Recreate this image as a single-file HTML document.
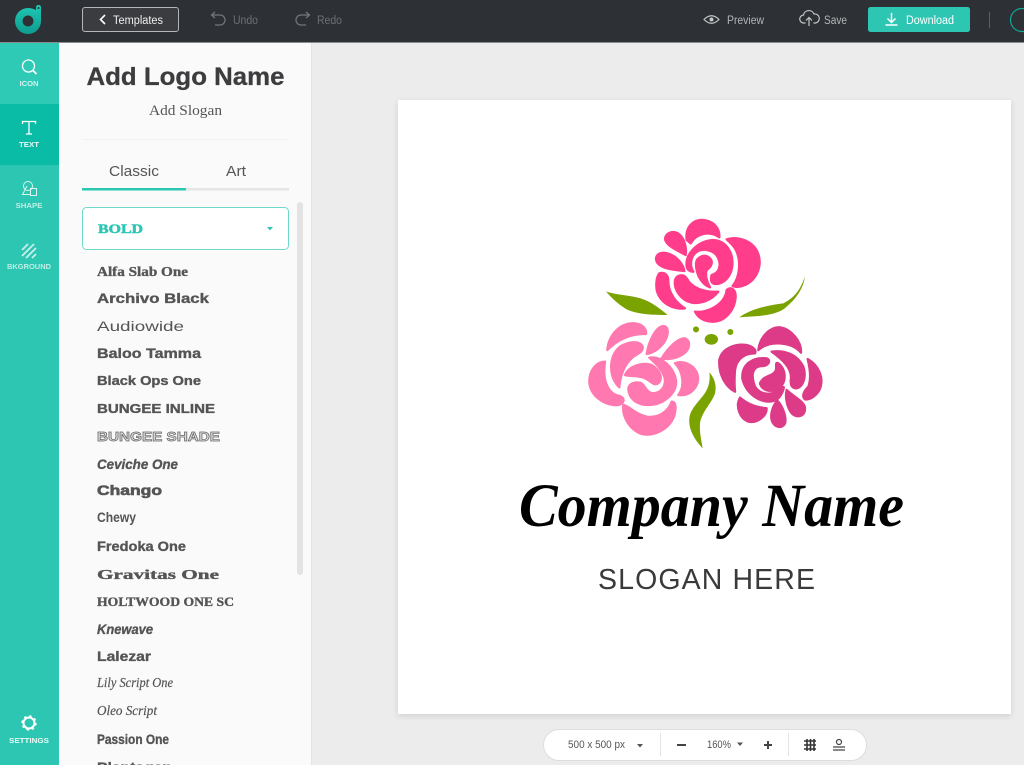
<!DOCTYPE html>
<html lang="en">
<head>
<meta charset="utf-8">
<title>Logo Maker</title>
<style>
html,body{margin:0;padding:0;width:1024px;height:765px;overflow:hidden;background:#ececec;font-family:"Liberation Sans",sans-serif}
.a{position:absolute}
#top{left:0;top:0;width:1024px;height:42px;background:#2d3035;border-bottom:1px solid #8a8c8e;box-sizing:content-box}
#side{left:0;top:43px;width:59px;height:722px;background:#2cc6b2}
#icon{left:0;top:43px;width:59px;height:61px;background:#2fcab6}
#act{left:0;top:104px;width:59px;height:61px;background:#0abba6}
#panel{left:59px;top:43px;width:252px;height:722px;background:#fafafa;border-right:1px solid #e4e4e4}
#card{left:398px;top:100px;width:613px;height:614px;background:#fff;box-shadow:0 2px 6px rgba(0,0,0,.12)}
#pill{left:543px;top:729px;width:322px;height:30px;background:#fff;border:1px solid #ddd;border-radius:16px}
svg{position:absolute;left:0;top:0}
</style>
</head>
<body>
<div class="a" id="top"></div>
<div class="a" id="side"></div>
<div class="a" id="icon"></div>
<div class="a" id="act"></div>
<div class="a" id="panel"></div>
<div class="a" id="card"></div>
<div class="a" id="pill"></div>

<svg width="1024" height="765" viewBox="0 0 1024 765" font-family="'Liberation Sans',sans-serif">
  <defs>
    <linearGradient id="lg" x1="0" y1="0" x2="0" y2="1">
      <stop offset="0" stop-color="#1fc9b3"/>
      <stop offset="1" stop-color="#0e9c90"/>
    </linearGradient>
  </defs>
  <!-- logo -->
  <path fill-rule="evenodd" fill="url(#lg)" d="M36 7.500q0-2.500 2.500-2.500t2.500 2.500V21a13 13 0 1 1-13-13q4 0 8 2zM28 15.500a5.500 5.500 0 1 0 .01 0z"/>
  <circle cx="38.500" cy="8" r="1" fill="#2d3035"/>

  <!-- templates -->
  <rect x="82.500" y="7.500" width="96" height="24" rx="2.500" fill="#3a3c40" stroke="#b5b6b8"/>
  <path d="M105 15l-4.500 4.500 4.500 4.500" fill="none" stroke="#fff" stroke-width="1.600"/>
  <text x="113" y="24" font-size="11.500" fill="#f0f0f0" textLength="50" lengthAdjust="spacingAndGlyphs">Templates</text>

  <path d="M212 15h8a5 5 0 0 1 0 10h-5M215 12l-3.500 3 3.500 3" fill="none" stroke="#74767a" stroke-width="1.200"/>
  <text x="233" y="24" font-size="11.500" fill="#6e7074" textLength="25" lengthAdjust="spacingAndGlyphs">Undo</text>
  <path d="M309 15h-8a5 5 0 0 0 0 10h5M306 12l3.500 3-3.500 3" fill="none" stroke="#74767a" stroke-width="1.200"/>
  <text x="317" y="24" font-size="11.500" fill="#6e7074" textLength="25" lengthAdjust="spacingAndGlyphs">Redo</text>

  <!-- right top -->
  <path d="M704 19.500q7.500-7.500 15 0q-7.500 7.500-15 0z" fill="none" stroke="#c5c6c8" stroke-width="1.200"/>
  <circle cx="711.500" cy="19.500" r="2" fill="#c5c6c8"/>
  <text x="727" y="24" font-size="11.500" fill="#b4b5b7" textLength="37" lengthAdjust="spacingAndGlyphs">Preview</text>
  <path d="M805.500 23h-1.500a4 4 0 0 1-.5-8a5.500 5.500 0 0 1 10.500-1a4.500 4.500 0 0 1 1.500 9h-2M809 26v-8M806 20.500l3-3 3 3" fill="none" stroke="#c5c6c8" stroke-width="1.200"/>
  <text x="824" y="24" font-size="11.500" fill="#b4b5b7" textLength="23" lengthAdjust="spacingAndGlyphs">Save</text>
  <rect x="868" y="7" width="102" height="25" rx="2.500" fill="#2cc6b2"/>
  <path d="M891.500 13v9M887.500 18.500l4 4 4-4M885.500 25h12" fill="none" stroke="#fff" stroke-width="1.500"/>
  <text x="906" y="24" font-size="11.500" fill="#fff" textLength="48" lengthAdjust="spacingAndGlyphs">Download</text>
  <rect x="989" y="12" width="1" height="16" fill="#5c5f63"/>
  <circle cx="1022" cy="20" r="11.500" fill="none" stroke="#12a896" stroke-width="1.200"/>

  <!-- sidebar -->
  <circle cx="28.500" cy="66" r="6" fill="none" stroke="#fff" stroke-width="1.300"/>
  <path d="M33 70.500l3.500 3.500" stroke="#fff" stroke-width="1.800"/>
  <text x="29" y="86" font-size="7.500" font-weight="bold" fill="#d4f4ef" text-anchor="middle" textLength="19" lengthAdjust="spacingAndGlyphs">ICON</text>

  <path d="M22.500 124v-2.500h13v2.500M29 121.500v12.500M26 134h6" fill="none" stroke="#fff" stroke-width="1.300"/>
  <text x="29" y="147" font-size="7.500" font-weight="bold" fill="#eafaf7" text-anchor="middle" textLength="20" lengthAdjust="spacingAndGlyphs">TEXT</text>

  <circle cx="28" cy="186" r="4.500" fill="none" stroke="#d8f5f0"/>
  <path d="M27 186l-4.500 8.500h8.500" fill="none" stroke="#d8f5f0"/>
  <rect x="30.500" y="188.500" width="6" height="7" fill="none" stroke="#d8f5f0"/>
  <text x="29" y="208" font-size="7.500" font-weight="bold" fill="#bfeee7" text-anchor="middle" textLength="27" lengthAdjust="spacingAndGlyphs">SHAPE</text>

  <path d="M22 250l6-6M22 256l12-12M26 258l10-10M32 258l4-4" stroke="#c8f0ea" stroke-width="1.800" fill="none"/>
  <text x="29" y="269" font-size="7.500" font-weight="bold" fill="#bfeee7" text-anchor="middle" textLength="44" lengthAdjust="spacingAndGlyphs">BKGROUND</text>

  <circle cx="29" cy="723" r="5.500" fill="none" stroke="#fff" stroke-width="2"/>
  <circle cx="29" cy="723" r="7" fill="none" stroke="#fff" stroke-width="1.400" stroke-dasharray="2.500 3"/>
  <text x="29" y="743" font-size="7.500" font-weight="bold" fill="#eafaf7" text-anchor="middle" textLength="40" lengthAdjust="spacingAndGlyphs">SETTINGS</text>

  <!-- panel header -->
  <text x="185.500" y="85" font-size="25" font-weight="bold" fill="#3d3d3f" stroke="#3d3d3f" stroke-width=".3" text-anchor="middle" textLength="198" lengthAdjust="spacingAndGlyphs">Add Logo Name</text>
  <text x="185.500" y="115" font-size="14.500" font-family="'Liberation Serif',serif" fill="#555" text-anchor="middle" textLength="73" lengthAdjust="spacingAndGlyphs">Add Slogan</text>
  <rect x="82" y="139" width="207" height="1" fill="#f1f1f1"/>

  <text x="109" y="176" font-size="14.500" fill="#555" textLength="50" lengthAdjust="spacingAndGlyphs">Classic</text>
  <text x="226" y="176" font-size="14.500" fill="#555" textLength="20" lengthAdjust="spacingAndGlyphs">Art</text>
  <rect x="82" y="188" width="207" height="2.500" fill="#e6e6e6"/>
  <rect x="82" y="188" width="104" height="2.500" fill="#2cc6b2"/>

  <rect x="82.500" y="207.500" width="206" height="42" rx="4" fill="#fff" stroke="#6fd8ca"/>
  <text x="98" y="233" font-size="13" font-weight="bold" font-family="'Liberation Serif',serif" fill="#2cc6b2" stroke="#2cc6b2" stroke-width=".5" textLength="45" lengthAdjust="spacingAndGlyphs">BOLD</text>
  <path d="M267 227h6l-3 3.500z" fill="#2cc6b2"/>

  <rect x="297" y="202" width="6" height="373" rx="3" fill="#e3e3e3"/>

  <!-- font list -->
  <g font-size="13.500" font-weight="bold" fill="#555" stroke="#555" stroke-width=".35">
    <text x="97" y="276" font-family="'Liberation Serif',serif" textLength="91" lengthAdjust="spacingAndGlyphs">Alfa Slab One</text>
    <text x="97" y="303" textLength="112" lengthAdjust="spacingAndGlyphs">Archivo Black</text>
    <text x="97" y="331" font-weight="normal" stroke="none" textLength="87" lengthAdjust="spacingAndGlyphs">Audiowide</text>
    <text x="97" y="358" textLength="104" lengthAdjust="spacingAndGlyphs">Baloo Tamma</text>
    <text x="97" y="385" font-size="12.500" textLength="104" lengthAdjust="spacingAndGlyphs">Black Ops One</text>
    <text x="97" y="413" font-size="12.500" textLength="118" lengthAdjust="spacingAndGlyphs">BUNGEE INLINE</text>
    <text x="97" y="441" font-size="13" fill="#ddd" stroke="#666" stroke-width=".7" textLength="123" lengthAdjust="spacingAndGlyphs">BUNGEE SHADE</text>
    <text x="97" y="469" font-style="italic" textLength="81" lengthAdjust="spacingAndGlyphs">Ceviche One</text>
    <text x="97" y="495" stroke-width=".6" textLength="65" lengthAdjust="spacingAndGlyphs">Chango</text>
    <text x="97" y="522" font-size="14" stroke="none" textLength="39" lengthAdjust="spacingAndGlyphs">Chewy</text>
    <text x="97" y="551" textLength="89" lengthAdjust="spacingAndGlyphs">Fredoka One</text>
    <text x="97" y="579" font-family="'Liberation Serif',serif" textLength="122" lengthAdjust="spacingAndGlyphs">Gravitas One</text>
    <text x="97" y="606" font-size="12.500" font-family="'Liberation Serif',serif" textLength="137" lengthAdjust="spacingAndGlyphs">HOLTWOOD ONE SC</text>
    <text x="97" y="634" font-style="italic" textLength="56" lengthAdjust="spacingAndGlyphs">Knewave</text>
    <text x="97" y="661" font-size="14" textLength="54" lengthAdjust="spacingAndGlyphs">Lalezar</text>
    <text x="97" y="687" font-family="'Liberation Serif',serif" font-style="italic" font-weight="normal" stroke-width=".2" textLength="76" lengthAdjust="spacingAndGlyphs">Lily Script One</text>
    <text x="97" y="715" font-family="'Liberation Serif',serif" font-style="italic" font-weight="normal" stroke-width=".2" textLength="60" lengthAdjust="spacingAndGlyphs">Oleo Script</text>
    <text x="97" y="744" font-size="14" textLength="72" lengthAdjust="spacingAndGlyphs">Passion One</text>
    <text x="97" y="772" font-size="14" textLength="75" lengthAdjust="spacingAndGlyphs">Plantagen</text>
  </g>

  <!-- flowers: coordinates in 3x space -->
  <g transform="translate(570 210) scale(.33333)" stroke-width="7" stroke-linejoin="round">
    <g fill="#ff3d8b" stroke="#ff3d8b">
      <path d="M350 90C345 50 370 28 400 30C430 32 450 55 448 82C420 62 380 68 362 100Z"/>
      <path d="M285 85C290 65 315 60 330 75C345 90 350 115 347 135C320 120 285 105 285 85Z"/>
      <path d="M258 145C262 125 285 125 305 135C325 145 340 165 343 183C310 180 258 175 258 145Z"/>
      <path d="M268 190C285 185 295 195 295 215C295 250 320 280 345 295C310 300 270 280 260 240C257 220 260 200 268 190Z"/>
      <path d="M470 88C500 78 545 90 562 125C580 165 560 210 525 225C510 232 495 232 488 228C510 200 515 150 495 115C487 103 478 95 470 88Z"/>
      <path d="M470 240C485 228 497 240 497 260C495 300 465 335 430 335C405 335 385 325 375 305C410 310 465 285 470 240Z"/>
      <path d="M315 210C320 195 340 190 350 205C365 235 405 248 445 245C425 270 395 282 365 278C335 272 310 240 315 210Z"/>
      <path d="M350 170C345 130 385 92 430 90C470 92 490 130 487 165C485 195 465 222 437 222C425 222 420 212 425 195C445 190 455 170 445 145C435 120 395 110 375 130C360 145 360 170 370 185C360 185 352 180 350 170Z"/>
      <path d="M378 160C380 140 405 130 420 145C430 155 425 170 410 180C405 195 410 215 420 232C400 225 378 200 378 160Z"/>
    </g>
    <g fill="#ff78b0" stroke="#ff78b0">
      <path d="M112 420C115 380 145 340 190 340C215 340 230 355 228 372C190 370 145 385 112 420Z"/>
      <path d="M230 432C235 400 255 350 280 348C300 350 295 380 280 400C265 420 245 430 230 432Z"/>
      <path d="M275 445C290 420 320 385 345 385C365 395 358 420 340 432C320 445 295 450 275 445Z"/>
      <path d="M148 532C115 500 115 440 150 410C175 395 210 390 218 410C220 425 205 430 190 440C165 460 150 495 148 532Z"/>
      <path d="M315 460C340 450 375 465 383 495C390 530 360 560 325 555C345 530 340 485 315 460Z"/>
      <path d="M105 455C80 455 58 480 58 515C60 560 110 590 145 585C165 580 165 565 150 558C120 555 95 520 105 455Z"/>
      <path d="M160 585C175 585 190 610 230 620C265 625 295 605 305 575C320 575 318 600 312 620C295 660 250 680 215 672C180 660 155 620 160 585Z"/>
      <path d="M238 443C275 438 310 470 318 510C322 550 280 585 235 585C200 585 175 565 175 535C178 520 195 515 210 518C225 522 225 545 248 550C275 550 290 525 283 500C272 470 245 450 238 443Z"/>
      <path d="M165 495C175 470 215 455 245 465C270 480 280 505 265 520C250 530 240 510 225 505C205 495 180 500 165 495Z"/>
    </g>
    <g fill="#dd3b88" stroke="#dd3b88">
      <path d="M565 420C570 380 600 350 630 352C665 358 695 395 693 428C665 395 600 390 565 420Z"/>
      <path d="M495 545C465 530 445 490 448 450C455 415 495 400 530 405C550 410 560 420 555 430C525 430 500 445 495 480C493 505 493 525 495 545Z"/>
      <path d="M605 425C640 420 680 430 700 470C710 500 700 530 680 535C665 535 660 525 663 505C665 475 640 450 605 425Z"/>
      <path d="M713 447C745 465 760 500 752 530C745 555 720 570 705 568C695 560 700 545 715 530C725 505 720 475 713 447Z"/>
      <path d="M517 505C515 465 545 440 590 445C605 450 595 470 575 468C550 470 540 490 555 530C575 560 610 555 635 535C650 520 635 555 625 565C595 590 530 565 517 505Z"/>
      <path d="M570 520C580 495 610 500 618 480C620 465 615 455 625 460C650 480 650 520 625 535C600 550 575 540 570 520Z"/>
      <path d="M510 563C525 575 545 590 590 595C590 620 560 640 535 635C510 625 495 590 510 563Z"/>
      <path d="M622 572C640 590 650 625 645 640C635 660 610 650 605 630C600 610 610 585 622 572Z"/>
      <path d="M650 540C670 560 705 575 705 595C705 620 680 625 665 610C650 590 645 560 650 540Z"/>
    </g>
    <g fill="#7aa300" stroke="none">
      <path d="M108 244C135 255 190 255 225 270C250 280 275 300 293 315C250 315 200 315 165 295C145 282 125 265 108 244Z"/>
      <path d="M705 200C690 240 675 262 640 280C600 285 545 295 508 322C555 318 620 320 650 290C680 265 700 235 705 200Z"/>
      <path d="M418 487C435 505 440 530 435 550C425 580 395 605 390 640C388 670 395 695 398 715C375 690 355 660 358 625C362 590 395 570 410 540C420 520 420 500 418 487Z"/>
      <circle cx="378" cy="358" r="9"/>
      <circle cx="481" cy="366" r="9"/>
      <ellipse cx="424" cy="388" rx="20" ry="16"/>
    </g>
  </g>

  <!-- logo text -->
  <text x="519" y="526" font-size="61" font-weight="bold" font-style="italic" font-family="'Liberation Serif',serif" fill="#000" textLength="385" lengthAdjust="spacingAndGlyphs">Company Name</text>
  <text x="598" y="589" font-size="28.500" fill="#3a3a3a" textLength="217" lengthAdjust="spacing">SLOGAN HERE</text>

  <!-- bottom toolbar -->
  <text x="568" y="748" font-size="11" fill="#555" textLength="57" lengthAdjust="spacingAndGlyphs">500 x 500 px</text>
  <path d="M637 744h6l-3 3.500z" fill="#555"/>
  <rect x="660" y="733" width="1" height="23" fill="#e4e4e4"/>
  <rect x="677" y="744" width="9" height="2" fill="#444"/>
  <text x="707" y="748" font-size="11" fill="#555" textLength="24" lengthAdjust="spacingAndGlyphs">160%</text>
  <path d="M737 742.500h6l-3 3.500z" fill="#555"/>
  <path d="M764 745h8M768 741v8" stroke="#444" stroke-width="2"/>
  <rect x="788" y="733" width="1" height="23" fill="#e4e4e4"/>
  <path d="M804 741h12M804 745h12M804 749h12M807 739v12M810.500 739v12M814 739v12" stroke="#333" stroke-width="1.600" fill="none"/>
  <circle cx="839" cy="742" r="2.500" fill="none" stroke="#444" stroke-width="1.200"/>
  <path d="M833 747h12M833 750h12" stroke="#444" stroke-width="1.200"/>
</svg>
</body>
</html>
